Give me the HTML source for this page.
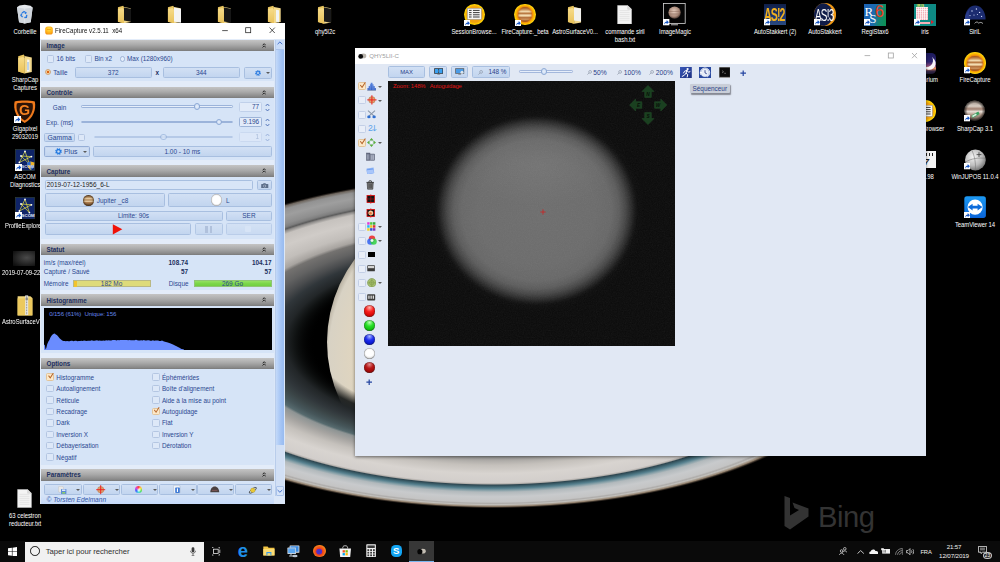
<!DOCTYPE html>
<html lang="fr">
<head>
<meta charset="utf-8">
<title>Bureau - FireCapture</title>
<style>
html,body{margin:0;padding:0;background:#000;}
body{width:1000px;height:562px;overflow:hidden;position:relative;font-family:"Liberation Sans",sans-serif;}
.abs{position:absolute;}
#saturn{position:absolute;left:0;top:0;width:1000px;height:562px;}
/* desktop icons */
.dl{position:absolute;color:#fff;font-size:6.6px;line-height:8px;text-align:center;white-space:nowrap;transform:translateX(-50%) scaleX(.9);text-shadow:0 0 1px #000,0 1px 1px #000;letter-spacing:-0.05px;}
.fcico{width:21.2px;height:21.2px;border-radius:50%;background:radial-gradient(circle,#c05a10 0,#d87010 36%,#f49a10 50%,#ffc800 64%,#ffe440 78%,#e8b000 90%,rgba(200,140,0,0) 100%);}
.fcico:before{content:"";position:absolute;left:3.2px;top:3.2px;right:3.2px;bottom:3.2px;border-radius:50%;background:linear-gradient(#8a5428,#c89058 16%,#f0d8ac 30%,#b87840 43%,#f4e0b8 55%,#f0d4a4 60%,#b06c38 71%,#d09860 82%,#94582c 94%);box-shadow:inset 0 0 1.6px .8px rgba(200,90,10,.7),0 0 1.4px .8px rgba(236,130,10,.85)}
/* FireCapture window */
#fc{position:absolute;left:40px;top:23px;width:244.5px;height:480.5px;background:#e3ecf9;overflow:hidden;}
#fc .title{position:absolute;left:0;top:0;width:100%;height:16px;background:#fff;}
.hdr{position:absolute;left:0.5px;width:233.5px;height:11.5px;background:linear-gradient(#c4c4c4,#a9a9a9 45%,#8a8a8a 85%,#7a7a7a);color:#1d2f5e;font-weight:bold;font-size:6.3px;line-height:12.6px;}
.hdr span{position:absolute;left:6px;top:0;}
.hdr i{position:absolute;right:7px;top:2.5px;width:5px;height:6px;}
.pan{position:absolute;left:0.5px;width:233.5px;background:#d6e4f7;}
.t{position:absolute;color:#2b4890;font-size:6.35px;line-height:9px;white-space:nowrap;}
.btn{position:absolute;box-sizing:border-box;border:1px solid #a8bfe0;border-radius:1.5px;background:linear-gradient(#d2e0f4,#c2d5ef);color:#2b4890;font-size:6.45px;text-align:center;white-space:nowrap;}
.cb{position:absolute;box-sizing:border-box;width:7.5px;height:7.5px;border:1px solid #b4c6e2;border-radius:1.5px;background:#dde8f8;}
.chev{position:absolute;right:7.6px;top:3.4px;width:4.4px;height:5.2px;fill:none;stroke:#1c1c1c;stroke-width:1.05}
.rb{position:absolute;box-sizing:border-box;width:5.6px;height:5.6px;border:1px solid #9fb4d6;border-radius:50%;background:#e4edfa;}
.rb.on{width:6.2px;height:6.2px;border-color:#cda67a;background:radial-gradient(#de6414 36%,#f6cf9c 52%)}
.dd{position:absolute;width:0;height:0;border-left:2px solid transparent;border-right:2px solid transparent;border-top:2.4px solid #5a5a5a;}
.sl{position:absolute;box-sizing:border-box;height:2.4px;border:0.8px solid #9bb3da;border-radius:1.2px;background:#e6eefa;}
.th{position:absolute;box-sizing:border-box;width:6.4px;height:6.4px;border-radius:50%;border:0.8px solid #8eaad6;background:radial-gradient(#e8f0fc,#c4d6f0);}
.vf{position:absolute;box-sizing:border-box;width:23.4px;height:9.4px;border:1px solid #c0d0ea;border-radius:1.5px;background:#e2ebf9;color:#2b4890;font-size:6.45px;line-height:7.6px;text-align:right;padding-right:2.2px;}
.spin{position:absolute;width:5px;height:9px;fill:none;stroke:#3a5fae;stroke-width:.8}
.t.b{font-weight:bold;color:#1d2f5e;font-size:6.4px}
.bar{position:absolute;box-sizing:border-box;height:7.8px;border:1px solid #aaa;color:#2b4890;font-size:6.45px;line-height:6.4px;text-align:center;}
.cb.ck{background:#fce8c8;border-color:#e2c49a}
.cb.ck:after{content:"";position:absolute;left:.6px;top:-1.6px;width:6px;height:6px;background:#b4642c;clip-path:polygon(4% 52%,18% 42%,38% 72%,84% 0,98% 8%,40% 98%);}
/* QHY window */
#qhy{position:absolute;left:354.6px;top:48px;width:571.9px;height:408px;background:#e1e8f4;overflow:hidden;box-shadow:0 1px 3px rgba(0,0,0,.5);}
#qhy .title{position:absolute;left:0;top:0;width:100%;height:16px;background:#fff;}
.cb.q{width:8px;height:8px;border-color:#c3cfe6;background:#e9eef8}
.cb.q.ck{background:#fce8c8;border-color:#e2c49a}
.cb.q.ck:after{left:.8px;top:-1.4px;width:6.4px;height:6.4px}
.ball{position:absolute;left:9.3px;width:11.4px;height:11.4px;border-radius:50%;box-shadow:inset 0 0 .8px .4px rgba(40,40,40,.55)}
/* taskbar */
#tb{position:absolute;left:0;top:541px;width:1000px;height:21px;background:#0a0a0a;}
</style>
</head>
<body>
<!--SATURN-->
<svg id="saturn" viewBox="0 0 1000 562" width="1000" height="562">
<defs>
<radialGradient id="rgn" cx="0.5" cy="0.5" r="0.5">
<stop offset="0" stop-color="#000" stop-opacity="0"/>
<stop offset="0.47" stop-color="#000" stop-opacity="0"/>
<stop offset="0.52" stop-color="#111414" stop-opacity="0.9"/>
<stop offset="0.546" stop-color="#222628"/>
<stop offset="0.585" stop-color="#30363a"/>
<stop offset="0.61" stop-color="#3a4446"/>
<stop offset="0.64" stop-color="#46565a"/>
<stop offset="0.662" stop-color="#566a6e"/>
<stop offset="0.672" stop-color="#8e9494"/>
<stop offset="0.70" stop-color="#a5a3a0"/>
<stop offset="0.74" stop-color="#c5c1bc"/>
<stop offset="0.79" stop-color="#d8d4d0"/>
<stop offset="0.845" stop-color="#d2cecb"/>
<stop offset="0.853" stop-color="#b4b0ac"/>
<stop offset="0.859" stop-color="#2e4650"/>
<stop offset="0.868" stop-color="#3c606c"/>
<stop offset="0.880" stop-color="#56808e"/>
<stop offset="0.891" stop-color="#86a0a8"/>
<stop offset="0.902" stop-color="#b2b9bc"/>
<stop offset="0.93" stop-color="#c8cacc"/>
<stop offset="0.962" stop-color="#c4c4c4"/>
<stop offset="0.970" stop-color="#aeacaa"/>
<stop offset="0.977" stop-color="#c2c0bc"/>
<stop offset="0.988" stop-color="#94826e"/>
<stop offset="0.998" stop-color="#1a1410" stop-opacity="0.5"/>
<stop offset="1" stop-color="#1a1410" stop-opacity="0"/>
</radialGradient>
<radialGradient id="rgf" cx="0.5" cy="0.5" r="0.5">
<stop offset="0" stop-color="#000" stop-opacity="0"/>
<stop offset="0.47" stop-color="#000" stop-opacity="0"/>
<stop offset="0.52" stop-color="#111414" stop-opacity="0.9"/>
<stop offset="0.546" stop-color="#222628"/>
<stop offset="0.585" stop-color="#30363a"/>
<stop offset="0.615" stop-color="#4a4c4e"/>
<stop offset="0.65" stop-color="#626262"/>
<stop offset="0.69" stop-color="#747270"/>
<stop offset="0.705" stop-color="#a8a4a0"/>
<stop offset="0.74" stop-color="#c2beba"/>
<stop offset="0.80" stop-color="#d0ccc8"/>
<stop offset="0.85" stop-color="#c6c2be"/>
<stop offset="0.866" stop-color="#8e8c8a"/>
<stop offset="0.874" stop-color="#5c5c5c"/>
<stop offset="0.884" stop-color="#7e7e7e"/>
<stop offset="0.90" stop-color="#8e8e8e"/>
<stop offset="0.94" stop-color="#9e9e9e"/>
<stop offset="0.972" stop-color="#929292"/>
<stop offset="0.988" stop-color="#6e665e"/>
<stop offset="0.998" stop-color="#1a1410" stop-opacity="0.5"/>
<stop offset="1" stop-color="#1a1410" stop-opacity="0"/>
</radialGradient>
<radialGradient id="gg" cx="0.6" cy="0.55" r="0.62">
<stop offset="0" stop-color="#ecc89c"/>
<stop offset="0.45" stop-color="#e8cfaa"/>
<stop offset="0.8" stop-color="#e2d6be"/>
<stop offset="0.96" stop-color="#d8d2c4"/>
<stop offset="1" stop-color="#a8a090"/>
</radialGradient>
<clipPath id="up"><rect x="0" y="0" width="1000" height="342"/></clipPath>
<clipPath id="dn"><rect x="0" y="342" width="1000" height="220"/></clipPath>
</defs>
<rect width="1000" height="562" fill="#000"/>
<g clip-path="url(#up)"><ellipse cx="493" cy="342.4" rx="380" ry="166" fill="url(#rgf)"/></g>
<ellipse cx="493" cy="342" rx="166" ry="150" fill="url(#gg)"/>
<g clip-path="url(#dn)"><ellipse cx="493" cy="342.4" rx="380" ry="166" fill="url(#rgn)"/></g>
<!-- Bing watermark -->
<g fill="#333">
<path d="M784.5 496 L790 498 L790 515.5 L799 510 L794.5 508 L792.5 502.5 L808.5 508.5 L808.5 516.5 L790 529.5 L784.5 526 Z"/>
<text x="818" y="526.5" font-family="Liberation Sans, sans-serif" font-size="29.2" letter-spacing="-0.5">Bing</text>
</g>
</svg>
<!--/SATURN-->
<!--DESKTOP-->
<svg width="0" height="0" style="position:absolute">
<defs>
<linearGradient id="fdg" x1="0" y1="0" x2="0" y2="1"><stop offset="0" stop-color="#f7dc8a"/><stop offset="1" stop-color="#e9c25a"/></linearGradient>
<symbol id="folder" viewBox="0 0 16 20"><path d="M1 2.2L6.6 .6 7.4 2V19.4L1 17.6Z" fill="#e8c45e"/><path d="M7.4 2L14.6 3.4V18L7.4 19.4Z" fill="#f3d98c"/><path d="M1 4L6 3 7.4 4.6V19.4L1 17.6Z" fill="url(#fdg)"/></symbol>
<symbol id="sc" viewBox="0 0 7 7"><rect width="7" height="7" fill="#fff"/><path d="M1.2 6C1.3 3.600 2.600 2.700 3.900 2.700V1L6.300 3.400 3.900 5.700V4.200C2.900 4.200 1.900 4.600 1.200 6Z" fill="#1857c4"/></symbol>
<symbol id="txt" viewBox="0 0 15 19"><path d="M.6 .4H10.6L14.4 4.2V18.6H.6Z" fill="#f4f4f4" stroke="#d0d0d0" stroke-width=".5"/><path d="M10.6 .4V4.2H14.4" fill="#dcdcdc" stroke="#c4c4c4" stroke-width=".4"/><path d="M2.4 5.4H12.4M2.4 7.4H12.4M2.4 9.4H12.4M2.4 11.4H12.4M2.4 13.4H12.4M2.4 15.4H12.4" stroke="#dedede" stroke-width=".7"/></symbol>
</defs>
</svg>
<!-- left column -->
<svg class="abs" style="left:15.2px;top:4.2px" width="19.4" height="19.8" viewBox="0 0 18 19"><path d="M1.6 3.2L4 1.4 9 .8 14.6 1.6 16.6 3.4 14.8 17.6 9 18.6 3.6 17.6Z" fill="#e4e8ec"/><path d="M1.6 3.2L9 4.6 16.6 3.4 14.8 17.6 9 18.6 3.6 17.6Z" fill="#cfd5dc"/><path d="M9 4.6V18.6" stroke="#eef1f4" stroke-width=".5"/><path d="M6.4 8.6L8.4 7.2 10.2 8.4 9.2 9.4M11 10.4L10.6 12.8 8.6 13M7 12.6L5.4 11 6.2 9.2" fill="none" stroke="#2a7be0" stroke-width="1.3"/></svg>
<div class="dl" style="left:25px;top:27.5px">Corbeille</div>
<svg class="abs" style="left:16.6px;top:53.5px" width="16.4" height="20"><use href="#folder"/></svg>
<svg class="abs" style="left:26.2px;top:59px" width="4" height="13" viewBox="0 0 4 13"><path d="M1.2 .4L3.4 .8 3.6 12.4 .8 12.8Z" fill="#f4f6f8"/><path d="M2 3V11" stroke="#6aa0d8" stroke-width=".8"/></svg>
<div class="dl" style="left:25px;top:76px">SharpCap<br>Captures</div>
<svg class="abs" style="left:13.4px;top:100px" width="23.4" height="23.6" viewBox="0 0 23.4 23.6"><path d="M1.600 1.400C6 .2 17.400 .2 21.800 1.400 23.400 9 20.400 18.200 11.700 23 3 18.200 0 9 1.600 1.400Z" fill="#f07a1c"/><path d="M3.800 3.400C7.600 2.600 15.800 2.600 19.600 3.400 20.800 9.400 18.400 16.600 11.700 20.400 5 16.600 2.600 9.400 3.800 3.400Z" fill="#2c1408"/></svg>
<div class="abs" style="left:18.6px;top:102px;font-size:15.5px;line-height:16px;font-weight:bold;color:#f58220;transform:scaleX(.92);transform-origin:0 0">G</div>
<svg class="abs" style="left:13.5px;top:116px" width="7" height="7"><use href="#sc"/></svg>
<div class="dl" style="left:25px;top:124.6px">Gigapixel<br>29032019</div>
<svg class="abs" style="left:14.8px;top:148.6px" width="20" height="22" viewBox="0 0 20 22"><rect x=".3" y=".3" width="19.4" height="21.4" fill="#0f2468" stroke="#3a4a30" stroke-width=".5"/><path d="M10 2.4L4.4 13.4 16.4 7.6 6 7 14.4 15Z" fill="none" stroke="#e8e040" stroke-width=".7"/><g fill="#fff"><circle cx="10" cy="2.4" r=".9"/><circle cx="4.4" cy="13.4" r=".9"/><circle cx="16.4" cy="7.6" r=".9"/><circle cx="6" cy="7" r=".9"/><circle cx="14.4" cy="15" r=".9"/></g><path d="M12 13.6L15.6 12.4 19.4 13.6C19.4 17.6 18 19.8 15.6 21 13.4 19.8 12 17.6 12 13.6Z" fill="#f0b428"/><path d="M15.6 12.4V21M12.2 16.4H19.2" stroke="#2a62c8" stroke-width="0"/><path d="M12 13.6L15.6 12.4V16.6H12.2ZM15.6 16.6H19.1C18.8 18.8 17.6 20.2 15.6 21Z" fill="#2a6ad0"/></svg>
<svg class="abs" style="left:14.5px;top:163.5px" width="7" height="7"><use href="#sc"/></svg>
<div class="abs" style="left:21.4px;top:164.4px;font-size:4.2px;line-height:5px;font-weight:bold;color:#cfd8f0">SCOM</div>
<div class="dl" style="left:25px;top:173px">ASCOM<br>Diagnostics</div>
<svg class="abs" style="left:14.8px;top:196.8px" width="20" height="22.4" viewBox="0 0 20 22.4"><rect x=".3" y=".3" width="19.4" height="21.8" fill="#0f2468" stroke="#3a4a30" stroke-width=".5"/><path d="M10 2.4L4.4 14 16.4 7.8 6 7 14.4 15.6Z" fill="none" stroke="#e8e040" stroke-width=".7"/><g fill="#fff"><circle cx="10" cy="2.4" r=".9"/><circle cx="4.4" cy="14" r=".9"/><circle cx="16.4" cy="7.8" r=".9"/><circle cx="6" cy="7" r=".9"/><circle cx="14.4" cy="15.6" r=".9"/></g></svg>
<svg class="abs" style="left:14.5px;top:212px" width="7" height="7"><use href="#sc"/></svg>
<div class="abs" style="left:21.6px;top:213.4px;font-size:4.4px;line-height:5px;font-weight:bold;color:#e6ecfa">SCOM</div>
<div class="dl" style="left:5.2px;top:221.7px;transform:scaleX(.9);transform-origin:0 0;text-align:left">ProfileExplorer</div>
<div class="abs" style="left:13px;top:251px;width:22px;height:15.4px;background:radial-gradient(ellipse at 62% 45%,#4a4a4a,#2c2c2c 45%,#141414 80%,#0a0a0a)"></div>
<div class="dl" style="left:1.6px;top:269px;transform:scaleX(.9);transform-origin:0 0;text-align:left">2019-07-09-2202_4</div>
<svg class="abs" style="left:17px;top:294.5px" width="16" height="21" viewBox="0 0 16 21"><path d="M.6 1.2H13.4L15.4 3V20.4H.6Z" fill="#f1d67e"/><path d="M.6 3.4H15.4V20.4H.6Z" fill="#ecc95e"/><rect x="8.2" y=".4" width="3" height="19.6" fill="#e8e8e8"/><path d="M9.7 .8V19.6" stroke="#7a7a7a" stroke-width="1" stroke-dasharray=".8 .8"/><rect x="8.6" y="2.6" width="2.2" height="2.6" fill="#8a8a8a"/></svg>
<div class="dl" style="left:1.6px;top:318px;transform:scaleX(.9);transform-origin:0 0;text-align:left">AstroSurfaceV0</div>
<svg class="abs" style="left:17.4px;top:489px" width="15" height="19"><use href="#txt"/></svg>
<div class="dl" style="left:25px;top:512px">63 celestron<br>reducteur.txt</div>
<!-- top row -->
<svg class="abs" style="left:116.5px;top:4.5px" width="15" height="19"><use href="#folder"/></svg><div class="abs" style="left:123.6px;top:7.6px;width:6.6px;height:13.4px;background:#161616;transform:skewY(10deg)"></div>
<svg class="abs" style="left:167px;top:4.5px" width="15" height="19"><use href="#folder"/></svg><div class="abs" style="left:173.6px;top:7.6px;width:6.8px;height:13.6px;background:#f4f4f4;transform:skewY(10deg)"></div>
<svg class="abs" style="left:217px;top:4.5px" width="15" height="19"><use href="#folder"/></svg><div class="abs" style="left:223.6px;top:7.6px;width:6.8px;height:13.6px;background:#161616;transform:skewY(10deg)"></div>
<svg class="abs" style="left:266.6px;top:4.5px" width="15" height="19"><use href="#folder"/></svg><div class="abs" style="left:275.6px;top:9.6px;width:2.6px;height:12px;background:#f1f4f6;transform:skewY(10deg)"></div>
<svg class="abs" style="left:317px;top:4.5px" width="15.4" height="19.4"><use href="#folder"/></svg><div class="abs" style="left:324px;top:7.8px;width:6.8px;height:13.6px;background:#1a1a1a;transform:skewY(10deg)"></div>
<div class="dl" style="left:324.5px;top:28px">qhy5l2c</div>
<!-- SessionBrowser -->
<div class="abs" style="left:463.6px;top:3.6px;width:21.4px;height:21.4px;border-radius:50%;background:radial-gradient(circle,#f0a010 0,#f0a010 52%,#ffd000 66%,#ffe640 78%,#e8b400 90%,rgba(200,140,0,0) 100%)"></div>
<svg class="abs" style="left:467.2px;top:8.4px" width="14.6" height="11.6" viewBox="0 0 14.6 11.6"><rect x=".3" y=".3" width="14" height="11" fill="#f6f6f6" stroke="#9a9a9a" stroke-width=".6"/><path d="M2 2.4H4.6M6 2.4H12.6M2 4.6H4.6M6 4.6H12.6M2 6.8H4.6M6 6.8H12.6M2 9H4.6M6 9H12.6" stroke="#3a3a3a" stroke-width="1"/></svg>
<svg class="abs" style="left:463.6px;top:19.6px" width="6.6" height="6.6"><use href="#sc"/></svg>
<div class="dl" style="left:473.8px;top:28px">SessionBrowse...</div>
<!-- FireCapture beta -->
<div class="abs fcico" style="left:514.4px;top:3.8px"></div>
<svg class="abs" style="left:514.6px;top:19.6px" width="6.6" height="6.6"><use href="#sc"/></svg>
<div class="dl" style="left:524.5px;top:28px">FireCapture._beta</div>
<svg class="abs" style="left:567px;top:4.5px" width="15.4" height="19.6"><use href="#folder"/></svg><div class="abs" style="left:573.8px;top:8px;width:7px;height:13.4px;background:#f1f1ee;transform:skewY(10deg)"></div>
<div class="dl" style="left:574.7px;top:28px">AstroSurfaceV0...</div>
<svg class="abs" style="left:617.2px;top:4.6px" width="15.2" height="19.4"><use href="#txt"/></svg>
<div class="dl" style="left:624.6px;top:28px">commande siril<br>bash.txt</div>
<!-- ImageMagic -->
<svg class="abs" style="left:663.4px;top:3.4px" width="22.6" height="22.4" viewBox="0 0 22.6 22.4"><rect x=".4" y=".4" width="21.8" height="20" fill="#050505" stroke="#d8d8d8" stroke-width=".8"/><defs><radialGradient id="imj" cx=".45" cy=".4" r=".6"><stop offset="0" stop-color="#e8d0c0"/><stop offset=".7" stop-color="#a88878"/><stop offset="1" stop-color="#4a3830"/></radialGradient></defs><circle cx="11.6" cy="9.6" r="6.2" fill="url(#imj)"/><path d="M6 8.4H17M6.2 11H17" stroke="#8a6a5a" stroke-width=".8" opacity=".7"/><path d="M8 21.8H15" stroke="#d0d0d0" stroke-width=".9"/></svg>
<svg class="abs" style="left:663.4px;top:19.4px" width="6.6" height="6.6"><use href="#sc"/></svg>
<div class="dl" style="left:674.5px;top:28px">ImageMagic</div>
<!-- AS!2 -->
<div class="abs" style="left:763.6px;top:3.8px;width:22px;height:21.6px;background:linear-gradient(#10204a,#1c3670 60%,#2a4a80);overflow:hidden"><div class="abs" style="left:.6px;top:1px;font-size:14.5px;line-height:14px;font-weight:bold;color:#f0b020;letter-spacing:-1.2px;transform:scale(.73,1.32);transform-origin:0 0;white-space:nowrap">AS!2</div></div>
<svg class="abs" style="left:763.6px;top:19px" width="6.6" height="6.6"><use href="#sc"/></svg>
<div class="dl" style="left:774.5px;top:28px">AutoStakkert (2)</div>
<!-- AS!3 -->
<div class="abs" style="left:813.6px;top:3.4px;width:22.4px;height:22.4px;border-radius:50%;background:#f09a18;overflow:hidden"><div class="abs" style="left:-3.4px;top:-.6px;width:22.6px;height:23.6px;border-radius:50%;background:#101c48"></div><div class="abs" style="left:1.2px;top:4.2px;font-size:13px;line-height:12px;color:#fff;letter-spacing:-1px;transform:scale(.76,1.28);transform-origin:0 0;white-space:nowrap">AS!3</div></div>
<svg class="abs" style="left:813.6px;top:19px" width="6.6" height="6.6"><use href="#sc"/></svg>
<div class="dl" style="left:824.5px;top:28px">AutoStakkert</div>
<!-- RegiStax -->
<div class="abs" style="left:863.6px;top:3.6px;width:22.4px;height:22px;background:linear-gradient(100deg,#1c62b4 0,#1c6ab0 45%,#128a6a 75%,#0c9050);overflow:hidden"><div class="abs" style="left:1px;top:1.4px;font-family:'Liberation Serif',serif;font-size:13px;line-height:13px;color:#fff">R</div><div class="abs" style="left:5.6px;top:8.4px;font-family:'Liberation Serif',serif;font-size:13px;line-height:13px;color:#e6eef8">S</div><div class="abs" style="left:11.4px;top:-.8px;font-size:16px;line-height:17px;color:#f03a1c">6</div></div>
<svg class="abs" style="left:863.6px;top:19px" width="6.6" height="6.6"><use href="#sc"/></svg>
<div class="dl" style="left:875px;top:28px">RegiStax6</div>
<!-- iris -->
<div class="abs" style="left:913.6px;top:3.6px;width:22.4px;height:22px;background:#0e8a84;overflow:hidden"><div class="abs" style="left:2.4px;top:3.6px;width:12.4px;height:13px;background:#f4b0b8;background-image:linear-gradient(90deg,rgba(255,255,255,.75) .6px,transparent .6px),linear-gradient(rgba(255,255,255,.75) .6px,transparent .6px);background-size:2.06px 2.16px"></div><div class="abs" style="left:3px;top:.4px;font-size:3.4px;line-height:4px;color:#f0e040;font-weight:bold;letter-spacing:.3px">IRIS</div><div class="abs" style="left:6.4px;top:18px;width:9.6px;height:2.6px;background:#f4b0b8"></div><div class="abs" style="left:17.6px;top:16.4px;width:0;height:0;border-top:2.4px solid transparent;border-bottom:2.4px solid transparent;border-left:3px solid #e02030"></div></div>
<svg class="abs" style="left:913.6px;top:19px" width="6.6" height="6.6"><use href="#sc"/></svg>
<div class="dl" style="left:925px;top:28px">iris</div>
<!-- SiriL -->
<svg class="abs" style="left:963.6px;top:3.6px" width="22.4" height="22.4" viewBox="0 0 22.4 22.4"><path d="M.8 15.6C.8 7.6 5.2 1.6 11.2 1.6S21.6 7.6 21.6 15.6Z" fill="#1c2c70"/><path d="M.8 15.6C.8 11 3 7 6.4 4.4 4 8 4.4 12.6 7 15.6Z" fill="#2a3c8a"/><g fill="#d8e0ff"><circle cx="8" cy="7" r=".7"/><circle cx="12.4" cy="5" r=".7"/><circle cx="15.6" cy="8.4" r=".7"/><circle cx="10" cy="11" r=".6"/><circle cx="6" cy="11.6" r=".6"/><circle cx="17.6" cy="12.4" r=".6"/><circle cx="13.4" cy="10.6" r=".5"/></g><path d="M10.6 19.4C12 17.6 13.6 17.6 14.8 19.2 16 18 17.6 18.2 19 19.6" fill="none" stroke="#e8e8e8" stroke-width=".7"/></svg>
<svg class="abs" style="left:963.6px;top:19px" width="6.6" height="6.6"><use href="#sc"/></svg>
<div class="dl" style="left:975px;top:28px">SiriL</div>
<!-- right column -->
<div class="abs fcico" style="left:964.2px;top:52.4px;width:21.6px;height:21.6px"></div>
<svg class="abs" style="left:963.6px;top:67.2px" width="6.6" height="6.6"><use href="#sc"/></svg>
<div class="dl" style="left:975px;top:76.3px">FireCapture</div>
<svg class="abs" style="left:963.4px;top:100.4px" width="22.6" height="22.4" viewBox="0 0 22.6 22.4"><defs><linearGradient id="scj" x1="0" y1="0" x2="0" y2="1"><stop offset="0" stop-color="#9a8c82"/><stop offset=".28" stop-color="#d8cec4"/><stop offset=".42" stop-color="#a08070"/><stop offset=".55" stop-color="#e6ded6"/><stop offset=".7" stop-color="#b09888"/><stop offset="1" stop-color="#6a5c54"/></linearGradient><radialGradient id="scs" cx=".5" cy=".5" r=".5"><stop offset=".7" stop-color="#000" stop-opacity="0"/><stop offset="1" stop-color="#000" stop-opacity=".65"/></radialGradient></defs><circle cx="11.6" cy="10.6" r="10.2" fill="url(#scj)"/><circle cx="11.6" cy="10.6" r="10.2" fill="url(#scs)"/><path d="M8.4 15.6L15.4 11.6 16.6 14 9.6 18Z" fill="#3aa060"/><path d="M9 15.8L13 13.6 13.8 15 9.8 17.2Z" fill="#d8f0e0"/></svg>
<svg class="abs" style="left:963.6px;top:115.4px" width="6.6" height="6.6"><use href="#sc"/></svg>
<div class="dl" style="left:975px;top:124.9px">SharpCap 3.1</div>
<svg class="abs" style="left:963.6px;top:148.8px" width="22.4" height="22.4" viewBox="0 0 22.4 22.4"><defs><radialGradient id="wj" cx=".4" cy=".35" r=".7"><stop offset="0" stop-color="#f4f4f4"/><stop offset=".6" stop-color="#bcbcbc"/><stop offset="1" stop-color="#6c6c6c"/></radialGradient></defs><circle cx="11.4" cy="11" r="10.4" fill="url(#wj)"/><path d="M1.6 13C7 9.6 15 8.4 21.4 9.4M8 1.4C10.6 7 12 14 11.4 21.2" fill="none" stroke="#7a7a7a" stroke-width=".6"/><path d="M12.6 5.6H17.4M15 3.2V8" stroke="#3a3a3a" stroke-width=".8"/></svg>
<svg class="abs" style="left:963.6px;top:163.4px" width="6.6" height="6.6"><use href="#sc"/></svg>
<div class="dl" style="left:975px;top:172.6px">WinJUPOS 11.0.4</div>
<svg class="abs" style="left:963.8px;top:196.4px" width="22.2" height="22.2" viewBox="0 0 22.2 22.2"><defs><linearGradient id="tv" x1="0" y1="0" x2="0" y2="1"><stop offset="0" stop-color="#1c9af4"/><stop offset="1" stop-color="#0a64d8"/></linearGradient></defs><rect x=".3" y=".3" width="21.6" height="21.6" rx="2.6" fill="url(#tv)"/><circle cx="11.1" cy="11.1" r="7.6" fill="#fff"/><path d="M3.8 11.1L8.6 7.8V9.8H13.6V7.8L18.4 11.1 13.6 14.4V12.4H8.6V14.4Z" fill="#0c6cdc"/></svg>
<svg class="abs" style="left:963.6px;top:211.6px" width="6.6" height="6.6"><use href="#sc"/></svg>
<div class="dl" style="left:975px;top:220.6px">TeamViewer 14</div>
<!-- partially hidden column -->
<div class="abs" style="left:914.6px;top:52.6px;width:21px;height:21.4px;border-radius:4.6px;background:linear-gradient(#1c1a5c 0,#2c2470 42%,#8a4a7a 62%,#e08a5a 74%,#3a2a4a 86%,#1a1630)"></div>
<div class="abs" style="left:920px;top:53.6px;width:13px;height:13px;border-radius:50%;box-shadow:3px 2.4px 0 0 #fff;transform:rotate(8deg);opacity:.95"></div>
<div class="dl" style="left:925px;top:75.6px">Stellarium</div>
<div class="abs" style="left:914.4px;top:100.2px;width:21.4px;height:21.4px;border-radius:50%;background:radial-gradient(circle,#f0a010 0,#f0a010 52%,#ffd000 66%,#ffe640 78%,#e8b400 90%,rgba(200,140,0,0) 100%)"></div>
<svg class="abs" style="left:918px;top:105px" width="14.6" height="11.6" viewBox="0 0 14.6 11.6"><rect x=".3" y=".3" width="14" height="11" fill="#f6f6f6" stroke="#9a9a9a" stroke-width=".6"/><path d="M2 2.4H4.6M6 2.4H12.6M2 4.6H4.6M6 4.6H12.6M2 6.8H4.6M6 6.8H12.6M2 9H4.6M6 9H12.6" stroke="#3a3a3a" stroke-width="1"/></svg>
<div class="dl" style="left:922.6px;top:125.2px">SessionBrowser</div>
<div class="abs" style="left:915px;top:151px;width:20.6px;height:17.4px;background:#f4f4f4"></div><div class="abs" style="left:917px;top:153px;width:16px;height:3px;background:repeating-linear-gradient(90deg,#222 0 1.4px,#f4f4f4 1.4px 3px)"></div><div class="abs" style="left:924px;top:158.4px;font-size:9px;line-height:9px;font-weight:bold;font-style:italic;color:#222">7</div>
<div class="dl" style="left:916.4px;top:172.6px">AviStack 2.98</div>
<!--/DESKTOP-->
<!--FC-->
<div id="fc">
<div class="title">
<svg class="abs" style="left:4.5px;top:3.2px" width="8" height="9" viewBox="0 0 8 9"><defs><radialGradient id="fci" cx=".5" cy=".35" r=".7"><stop offset="0" stop-color="#ffe34a"/><stop offset=".6" stop-color="#ffb31a"/><stop offset="1" stop-color="#f08a10"/></radialGradient></defs><rect x=".2" y=".4" width="7.6" height="8.2" rx="2.6" fill="url(#fci)"/><rect x="2" y="3.2" width="4" height=".8" fill="#f39a16"/></svg>
<div class="abs" style="left:15px;top:2.6px;font-size:7.1px;line-height:10px;color:#111;white-space:pre;transform:scaleX(.865);transform-origin:0 0">FireCapture v2.5.11  x64</div>
<svg class="abs" style="left:178px;top:2px" width="62" height="12" viewBox="0 0 62 12" fill="none" stroke="#222" stroke-width=".75"><path d="M4.2 5.6h5.6"/><rect x="27.7" y="2.7" width="5" height="5"/><path d="M51.6 2.6l5.2 5.4M56.8 2.6l-5.2 5.4"/></svg>
</div>
<!-- scrollbar -->
<div class="abs" style="left:234px;top:16px;width:10.5px;height:464.5px;background:#dbe7f8"></div>
<div class="abs" style="left:235.3px;top:16.5px;width:8.6px;height:456.5px;background:#d2e0f5;border-left:1px solid #b9cdeb;box-sizing:border-box"></div>
<div class="abs" style="left:236.3px;top:27px;width:7.6px;height:394.5px;background:linear-gradient(90deg,#c3d9f9,#a4c4f4 60%,#98bbf0);"></div>
<div class="abs" style="left:236.3px;top:17px;width:7.6px;height:9.5px;background:#c9dcf8;border-bottom:1px solid #a9c2ea;box-sizing:border-box"></div>
<svg class="abs" style="left:237.3px;top:18px" width="5.8" height="4.4" viewBox="0 0 6.5 5" fill="none" stroke="#3f6cc8" stroke-width="1.1"><path d="M.6 3.6L3.25 1.1 5.9 3.6"/></svg>
<div class="abs" style="left:236.3px;top:463px;width:7.6px;height:10px;background:#d6e4f8;border:1px solid #a9c2ea;box-sizing:border-box;border-radius:1px"></div>
<svg class="abs" style="left:237.3px;top:466.4px" width="5.8" height="4.4" viewBox="0 0 6.5 5" fill="none" stroke="#3f6cc8" stroke-width="1.1"><path d="M.6 1.2L3.25 3.7 5.9 1.2"/></svg>
<!-- IMAGE -->
<div class="hdr" style="top:16.5px"><span>Image</span><svg class="chev" viewBox="0 0 5 6"><path d="M.6 2.7L2.5 .8 4.4 2.7M.6 5.2L2.5 3.3 4.4 5.2"/></svg></div>
<div class="pan" style="top:28px;height:30px">
<div class="cb" style="left:6px;top:4.3px"></div><div class="t" style="left:16.1px;top:3.4px">16 bits</div>
<div class="cb" style="left:44px;top:4.3px"></div><div class="t" style="left:53.9px;top:3.4px">Bin x2</div>
<div class="rb" style="left:79.4px;top:5.2px"></div><div class="t" style="left:86.4px;top:3.4px">Max (1280x960)</div>
<div class="rb on" style="left:4.1px;top:18.3px"></div><div class="t" style="left:12.7px;top:17px">Taille</div>
<div class="btn" style="left:34.2px;top:16px;width:77px;height:11px;line-height:9.4px">372</div>
<div class="t" style="left:115px;top:17px;font-weight:bold;color:#1d2f5e">x</div>
<div class="btn" style="left:122.2px;top:16px;width:77.3px;height:11px;line-height:9.4px">344</div>
<div class="btn" style="left:203.8px;top:16px;width:27.4px;height:11.5px"><svg class="abs" style="left:9.5px;top:2.2px" width="6" height="6" viewBox="0 0 6 6"><circle cx="3" cy="3" r="2.1" fill="none" stroke="#2a7be0" stroke-width="1.5" stroke-dasharray="1.1 .55"/><circle cx="3" cy="3" r="1.5" fill="none" stroke="#2a7be0" stroke-width=".9"/></svg><i class="dd" style="left:20.5px;top:4.2px"></i></div>
</div>
<!-- CONTROLE -->
<div class="hdr" style="top:63.5px"><span>Contrôle</span><svg class="chev" viewBox="0 0 5 6"><path d="M.6 2.7L2.5 .8 4.4 2.7M.6 5.2L2.5 3.3 4.4 5.2"/></svg></div>
<div class="pan" style="top:75px;height:62px">
<div class="t" style="left:12.3px;top:4.8px">Gain</div>
<div class="sl" style="left:40px;top:7.4px;width:152.5px"></div><div class="th" style="left:153.6px;top:5.4px"></div>
<div class="vf" style="left:198.5px;top:4.2px">77</div><svg class="spin" style="left:224px;top:4.6px" viewBox="0 0 5 9"><path d="M.7 3L2.5 1 4.3 3M.7 6L2.5 8 4.3 6"/></svg>
<div class="t" style="left:5.6px;top:19.8px">Exp. (ms)</div>
<div class="sl" style="left:40px;top:22.6px;width:152.5px"></div><div class="th" style="left:175.3px;top:20.6px"></div>
<div class="vf" style="left:198.5px;top:19.3px;border-color:#9db4d8">9.196</div><svg class="spin" style="left:224px;top:19.8px" viewBox="0 0 5 9"><path d="M.7 3L2.5 1 4.3 3M.7 6L2.5 8 4.3 6"/></svg>
<div class="btn" style="left:3.5px;top:35.3px;width:31.2px;height:8.6px;line-height:7px;font-size:6.8px">Gamma</div>
<div class="cb" style="left:37.3px;top:35.6px"></div>
<div class="sl" style="left:53.2px;top:37.8px;width:139.3px;opacity:.55"></div><div class="th" style="left:119.7px;top:35.8px;opacity:.6"></div>
<div class="vf" style="left:198.5px;top:34.4px;opacity:.5;color:#7d93bd">1</div><svg class="spin" style="left:224px;top:34.8px;opacity:.45" viewBox="0 0 5 9"><path d="M.7 3L2.5 1 4.3 3M.7 6L2.5 8 4.3 6"/></svg>
<div class="btn" style="left:3.5px;top:47.5px;width:46.1px;height:11.3px;border-color:#95aed6;box-shadow:inset 0 0 0 .6px #c0d2ee"><svg class="abs" style="left:9.8px;top:1.6px" width="7" height="7" viewBox="0 0 7 7"><circle cx="3.5" cy="3.5" r="2.45" fill="none" stroke="#1f78e0" stroke-width="1.7" stroke-dasharray="1.2 .72"/><circle cx="3.5" cy="3.5" r="1.85" fill="none" stroke="#1f78e0" stroke-width="1.1"/></svg><span class="abs" style="left:19px;top:.4px;line-height:9px;font-size:6.9px">Plus</span><i class="dd" style="left:38px;top:4px"></i></div>
<div class="btn" style="left:52.6px;top:48px;width:178.6px;height:10.8px;line-height:9px">1.00 - 10 ms</div>
</div>
<!-- CAPTURE -->
<div class="hdr" style="top:141.5px;height:12px;line-height:13.1px"><span>Capture</span><svg class="chev" viewBox="0 0 5 6"><path d="M.6 2.7L2.5 .8 4.4 2.7M.6 5.2L2.5 3.3 4.4 5.2"/></svg></div>
<div class="pan" style="top:153.5px;height:62.5px">
<div class="btn" style="left:4px;top:3.2px;width:208.5px;height:10.6px;text-align:left;color:#222;line-height:8.8px;padding-left:1.2px;background:#d8e5f7;font-size:6.5px">2019-07-12-1956_6-L</div>
<div class="btn" style="left:216.8px;top:3.2px;width:14.4px;height:10.4px"><svg class="abs" style="left:3px;top:2px" width="7.5" height="5.5" viewBox="0 0 7.5 5.5"><rect x=".2" y="1" width="7.1" height="4.3" rx=".6" fill="#5d6f8a"/><rect x="2.3" y=".2" width="2.4" height="1.2" fill="#5d6f8a"/><circle cx="3.75" cy="3.1" r="1.45" fill="#b9c6da"/><circle cx="3.75" cy="3.1" r=".8" fill="#4a5a74"/></svg></div>
<div class="btn" style="left:4px;top:16.2px;width:120.4px;height:14.8px"><span class="abs" style="left:37px;top:1.1px;width:11.6px;height:11.6px;border-radius:50%;background:linear-gradient(#7a5a3a,#c49a6a 22%,#e8d0a8 34%,#a87848 46%,#f0dcb8 56%,#b08050 68%,#8a6440 82%,#5c4028);box-shadow:inset 0 0 1.5px 1px rgba(60,40,20,.75)"></span><span class="abs" style="left:51.3px;top:2.4px;line-height:9px">Jupiter _c8</span></div>
<div class="btn" style="left:127.9px;top:16.2px;width:103.3px;height:14.8px"><span class="abs" style="left:42px;top:.6px;width:11px;height:12.2px;border-radius:50%;background:radial-gradient(circle at 50% 45%,#fff 55%,#d8d8d8 75%,#a8a8a8);box-shadow:inset 0 0 1px .5px rgba(120,120,120,.7)"></span><span class="abs" style="left:56.6px;top:2.4px;line-height:9px">L</span></div>
<div class="btn" style="left:4px;top:34px;width:178px;height:10.4px;line-height:8.6px">Limite: 90s</div>
<div class="btn" style="left:185.7px;top:34px;width:45.5px;height:10.4px;line-height:8.6px">SER</div>
<div class="btn" style="left:4px;top:46.1px;width:146.3px;height:12.6px"><svg class="abs" style="left:66.3px;top:.3px" width="11" height="11" viewBox="0 0 11 11"><path d="M.8 .3L10.3 5.3 .8 10.6Z" fill="#f01208"/></svg></div>
<div class="btn" style="left:154.5px;top:46.1px;width:27.5px;height:12.6px;opacity:.75"><span class="abs" style="left:9.4px;top:2.2px;width:2.6px;height:7px;background:#a4b6d4"></span><span class="abs" style="left:13.8px;top:2.2px;width:2.6px;height:7px;background:#a4b6d4"></span></div>
<div class="btn" style="left:185.7px;top:46.1px;width:45.5px;height:12.6px;opacity:.6"><span class="abs" style="left:18px;top:2.3px;width:6.2px;height:6.2px;background:#d8e4f6;border-radius:1px"></span></div>
</div>
<!-- STATUT -->
<div class="hdr" style="top:220.5px"><span>Statut</span><svg class="chev" viewBox="0 0 5 6"><path d="M.6 2.7L2.5 .8 4.4 2.7M.6 5.2L2.5 3.3 4.4 5.2"/></svg></div>
<div class="pan" style="top:232px;height:35px">
<div class="t" style="left:3.3px;top:2.8px">im/s (max/réel)</div>
<div class="t b" style="right:85.9px;top:2.8px">108.74</div><div class="t b" style="right:2.5px;top:2.8px">104.17</div>
<div class="t" style="left:3.3px;top:12.4px">Capturé / Sauvé</div>
<div class="t b" style="right:85.9px;top:12.4px">57</div><div class="t b" style="right:2.5px;top:12.4px">57</div>
<div class="t" style="left:3.3px;top:24.2px">Mémoire</div>
<div class="bar" style="left:32.1px;top:24.7px;width:78px;background:#dedb7a;border-color:#b9b884"><i style="position:absolute;left:.6px;top:.4px;width:2.6px;height:5.8px;background:#f2c32c"></i>182 Mo</div>
<div class="t" style="left:128.2px;top:24.2px">Disque</div>
<div class="bar" style="left:153px;top:24.7px;width:78px;background:linear-gradient(#93e162,#7cd64a 50%,#70cf40);border-color:#8fc474">269 Go</div>
</div>
<!-- HISTOGRAMME -->
<div class="hdr" style="top:271px;height:12px;line-height:13.1px"><span>Histogramme</span><svg class="chev" viewBox="0 0 5 6"><path d="M.6 2.7L2.5 .8 4.4 2.7M.6 5.2L2.5 3.3 4.4 5.2"/></svg></div>
<div class="pan" style="top:283px;height:46.5px">
<svg class="abs" style="left:3.5px;top:2px" width="228" height="42" viewBox="0 0 228 42">
<rect width="228" height="42" fill="#000"/>
<path fill="#6a8cff" d="M0 42 L0 37.2 L0.8 36.6 L1.5 41.4 L2.3 40 L3.2 36.2 L4.4 33.6 L5.4 32 L6.4 29.6 L7.5 27.8 L8.6 26.4 L9.8 25.7 L10.8 25.5 L11.8 26.4 L12.8 27 L13.8 28.1 L14.8 29.3 L15.8 30.4 L17 31.6 L18.2 32.6 L19.5 33 L20.5 33.01 L21.8 33.2 L23.1 33.05 L24.4 33.19 L25.7 33.18 L27 32.76 L28.3 32.7 L29.6 33.25 L30.9 32.82 L32.2 32.77 L33.5 33.28 L34.8 32.89 L36.1 33.12 L37.4 32.84 L38.7 32.93 L40 32.56 L41.3 32.87 L42.6 33.01 L43.9 32.75 L45.2 32.87 L46.5 32.8 L47.8 32.35 L49.1 32.81 L50.4 32.66 L51.7 32.44 L53 32.22 L54.3 32.78 L55.6 32.48 L56.9 32.63 L58.2 32.71 L59.5 32.57 L60.8 32.69 L62.1 32.3 L63.4 32.56 L64.7 32.28 L66 32.6 L67.3 32.53 L68.6 31.96 L69.9 31.96 L71.2 31.99 L72.5 32.49 L73.8 32.1 L75.1 32.2 L76.4 31.95 L77.7 32.07 L79 31.96 L80.3 31.91 L81.6 32.05 L82.9 32.02 L84.2 32.22 L85.5 32.04 L86.8 32.22 L88.1 32.21 L89.4 32.34 L90.7 32.15 L92 31.83 L93.3 32.36 L94.6 32.47 L95.9 32.46 L97.2 32.26 L98.5 32.4 L99.8 32.09 L101.1 32.56 L102.4 32.41 L103.7 32.25 L105 32.13 L106.3 32.72 L107.6 32.85 L108.9 32.26 L110.2 32.79 L111.5 32.55 L112.8 32.41 L114.1 32.55 L115.4 32.92 L116.7 33.02 L118 32.48 L120 33.4 L123 34.2 L126 35.2 L129 36.6 L132 38 L135 39.6 L137.5 41 L139.6 41.3 L140 42Z"/>
<text x="5.2" y="7.6" font-family="Liberation Sans, sans-serif" font-size="6.1" fill="#6484e8" xml:space="preserve" letter-spacing="-0.1">0/156 (61%)  Unique: 156</text>
</svg>
</div>
<!-- OPTIONS -->
<div class="hdr" style="top:334.7px"><span>Options</span><svg class="chev" viewBox="0 0 5 6"><path d="M.6 2.7L2.5 .8 4.4 2.7M.6 5.2L2.5 3.3 4.4 5.2"/></svg></div>
<div class="pan" style="top:346.2px;height:96px">
<div class="cb ck" style="left:5.8px;top:4.2px"></div><div class="t" style="left:15.8px;top:3.6px">Histogramme</div>
<div class="cb" style="left:5.8px;top:15.6px"></div><div class="t" style="left:15.8px;top:15px">Autoalignement</div>
<div class="cb" style="left:5.8px;top:27px"></div><div class="t" style="left:15.8px;top:26.4px">Réticule</div>
<div class="cb" style="left:5.8px;top:38.5px"></div><div class="t" style="left:15.8px;top:37.9px">Recadrage</div>
<div class="cb" style="left:5.8px;top:49.9px"></div><div class="t" style="left:15.8px;top:49.3px">Dark</div>
<div class="cb" style="left:5.8px;top:61.4px"></div><div class="t" style="left:15.8px;top:60.8px">Inversion X</div>
<div class="cb" style="left:5.8px;top:72.8px"></div><div class="t" style="left:15.8px;top:72.2px">Débayerisation</div>
<div class="cb" style="left:5.8px;top:84.2px"></div><div class="t" style="left:15.8px;top:83.6px">Négatif</div>
<div class="cb" style="left:111.6px;top:4.2px"></div><div class="t" style="left:121.4px;top:3.6px">Éphémérides</div>
<div class="cb" style="left:111.6px;top:15.6px"></div><div class="t" style="left:121.4px;top:15px">Boîte d'alignement</div>
<div class="cb" style="left:111.6px;top:27px"></div><div class="t" style="left:121.4px;top:26.4px">Aide à la mise au point</div>
<div class="cb ck" style="left:111.6px;top:38.5px"></div><div class="t" style="left:121.4px;top:37.9px">Autoguidage</div>
<div class="cb" style="left:111.6px;top:49.9px"></div><div class="t" style="left:121.4px;top:49.3px">Flat</div>
<div class="cb" style="left:111.6px;top:61.4px"></div><div class="t" style="left:121.4px;top:60.8px">Inversion Y</div>
<div class="cb" style="left:111.6px;top:72.8px"></div><div class="t" style="left:121.4px;top:72.2px">Dérotation</div>
</div>
<!-- PARAMETRES -->
<div class="hdr" style="top:446px"><span>Paramètres</span><svg class="chev" viewBox="0 0 5 6"><path d="M.6 2.7L2.5 .8 4.4 2.7M.6 5.2L2.5 3.3 4.4 5.2"/></svg></div>
<div class="pan" style="top:458px;height:22.5px;background:linear-gradient(#d6e4f7 60%,#c6dafa)">
<div class="btn" style="left:3.9px;top:3px;width:37.4px;height:11.2px"><svg class="abs" style="left:13px;top:.8px" width="9" height="8.5" viewBox="0 0 9 8.5"><rect x=".4" y=".3" width="5" height="6" rx="1.2" fill="#e8e8e8" stroke="#bbb" stroke-width=".4"/><rect x="3" y="3" width="5.4" height="5" rx=".6" fill="#5b8bd8"/><rect x="4" y="3.4" width="3.4" height="1.6" fill="#dfe9f8"/><rect x="4.2" y="6" width="3" height="1.6" fill="#8fd06a"/></svg><i class="dd" style="left:31px;top:4.3px"></i></div>
<div class="btn" style="left:42px;top:3px;width:37.5px;height:11.2px"><svg class="abs" style="left:12.8px;top:.3px" width="9.4" height="9.4" viewBox="0 0 9.4 9.4"><circle cx="4.7" cy="4.7" r="3.2" fill="#d9a070"/><circle cx="4.7" cy="4.7" r="3.2" fill="none" stroke="#b06a3a" stroke-width=".4"/><path d="M4.7 .2V9.2M.2 4.7H9.2" stroke="#f01818" stroke-width=".9"/></svg><i class="dd" style="left:31px;top:4.3px"></i></div>
<div class="btn" style="left:80.4px;top:3px;width:37.2px;height:11.2px"><span class="abs" style="left:13px;top:.9px;width:7.6px;height:7.6px;border-radius:50%;background:conic-gradient(#f44,#fd4,#4d4,#4dd,#46f,#d4d,#f44)"><span class="abs" style="left:1.8px;top:1.8px;width:4px;height:4px;border-radius:50%;background:radial-gradient(#fff,rgba(255,255,255,0))"></span></span><i class="dd" style="left:31px;top:4.3px"></i></div>
<div class="btn" style="left:118.5px;top:3px;width:37.5px;height:11.2px"><svg class="abs" style="left:13.2px;top:.4px" width="8" height="8.6" viewBox="0 0 8 8.6"><rect x=".4" y=".3" width="6.6" height="8" rx="1" fill="#eef2f8" stroke="#9ab" stroke-width=".4"/><rect x="2.2" y="2.4" width="4.6" height="5.6" rx=".8" fill="#3e7ad6"/><rect x="3.9" y="3.4" width="1.1" height="3.6" fill="#fff"/></svg><i class="dd" style="left:31px;top:4.3px"></i></div>
<div class="btn" style="left:156.6px;top:3px;width:37.2px;height:11.2px"><svg class="abs" style="left:12.4px;top:1.4px" width="9.5" height="6.5" viewBox="0 0 9.5 6.5"><path d="M.3 6.2C.3 2.6 2.2 .4 4.75 .4S9.2 2.6 9.2 6.2Z" fill="#4a4040"/><path d="M2 4.4h5.4" stroke="#8a5a5a" stroke-width=".8"/></svg><i class="dd" style="left:31px;top:4.3px"></i></div>
<div class="btn" style="left:194.7px;top:3px;width:37.2px;height:11.2px"><svg class="abs" style="left:11.4px;top:.5px" width="9.6" height="8.6" viewBox="0 0 9.6 8.6"><ellipse cx="4.8" cy="4.3" rx="4.4" ry="1.5" transform="rotate(-38 4.8 4.3)" fill="none" stroke="#3a3a3a" stroke-width=".7"/><circle cx="4.8" cy="4.3" r="2.3" fill="#e8c838"/><circle cx="4.8" cy="4.3" r="2.3" fill="none" stroke="#a08818" stroke-width=".3"/></svg><i class="dd" style="left:31px;top:4.3px"></i></div>
<div class="t" style="left:6px;top:14.2px;font-style:italic;font-size:6.55px;color:#3458a8">© Torsten Edelmann</div>
</div>
</div>
<!--/FC-->
<!--QHY-->
<div id="qhy">
<div class="title">
<svg class="abs" style="left:3.6px;top:4.6px" width="8.5" height="6.5" viewBox="0 0 8.5 6.5"><ellipse cx="5.4" cy="2.9" rx="2.9" ry="2.3" fill="#b9b4ac"/><circle cx="2.7" cy="3.4" r="2.4" fill="#0c0c0c"/></svg>
<div class="abs" style="left:14.6px;top:3px;font-size:6.15px;line-height:10px;color:#a0a0a0;letter-spacing:-0.05px">QHY5LII-C</div>
<svg class="abs" style="left:505px;top:2px" width="62" height="12" viewBox="0 0 62 12" fill="none" stroke="#9c9c9c" stroke-width=".75"><path d="M4.6 5.6h5.6"/><rect x="28.3" y="3" width="5" height="5"/><path d="M52 3l5 5.2M57 3l-5 5.2"/></svg>
</div>
<!-- top toolbar -->
<div class="btn" style="left:33.5px;top:18.2px;width:37px;height:11.4px;line-height:10.4px;font-size:5.9px;color:#2a4288">MAX</div>
<div class="btn" style="left:74.5px;top:18.2px;width:17.6px;height:11.4px"><svg class="abs" style="left:3.6px;top:1.3px" width="9.4" height="7" viewBox="0 0 9.4 7"><rect x=".2" y=".2" width="9" height="5.6" fill="#2d3138"/><rect x="1" y=".9" width="3.3" height="4.2" fill="#3aa0f0"/><rect x="5.1" y=".9" width="3.3" height="4.2" fill="#3aa0f0"/><path d="M4.3 3h.8" stroke="#bfe0ff" stroke-width=".6"/><rect x="3.3" y="5.9" width="2.8" height=".7" fill="#777"/></svg></div>
<div class="btn" style="left:96.2px;top:18.2px;width:17.6px;height:11.4px"><svg class="abs" style="left:3.6px;top:1.3px" width="9.4" height="7" viewBox="0 0 9.4 7"><rect x=".2" y=".2" width="9" height="5.6" fill="#5a5e66"/><rect x="1" y=".9" width="7.4" height="4.2" fill="#4a9be6"/><circle cx="7" cy="4.3" r="1.5" fill="#dfe6ee"/><rect x="3.3" y="5.9" width="2.8" height=".7" fill="#777"/></svg></div>
<div class="btn" style="left:117.3px;top:18.2px;width:38.1px;height:11.4px;line-height:9.6px;font-size:6.35px;color:#2a4288"><svg class="abs" style="left:5.5px;top:2.4px" width="5" height="5" viewBox="0 0 5 5" fill="none" stroke="#8e98a8" stroke-width=".7"><circle cx="3.1" cy="1.9" r="1.4"/><path d="M2.1 2.9L.4 4.6"/></svg><span class="abs" style="left:15.6px;top:0">148 %</span></div>
<div class="sl" style="left:164.7px;top:22.3px;width:53.3px;border-color:#a3b7dc"></div><div class="th" style="left:186.2px;top:20.2px"></div>
<svg class="abs" style="left:232px;top:22px" width="5" height="5" viewBox="0 0 5 5" fill="none" stroke="#8e98a8" stroke-width=".7"><circle cx="3.1" cy="1.9" r="1.4"/><path d="M2.1 2.9L.4 4.6"/></svg>
<div class="t" style="left:238.6px;top:20.3px;font-size:6.7px;color:#2a4288">50%</div>
<svg class="abs" style="left:262px;top:22px" width="5" height="5" viewBox="0 0 5 5" fill="none" stroke="#8e98a8" stroke-width=".7"><circle cx="3.1" cy="1.9" r="1.4"/><path d="M2.1 2.9L.4 4.6"/></svg>
<div class="t" style="left:269.2px;top:20.3px;font-size:6.7px;color:#2a4288">100%</div>
<svg class="abs" style="left:294px;top:22px" width="5" height="5" viewBox="0 0 5 5" fill="none" stroke="#8e98a8" stroke-width=".7"><circle cx="3.1" cy="1.9" r="1.4"/><path d="M2.1 2.9L.4 4.6"/></svg>
<div class="t" style="left:301.2px;top:20.3px;font-size:6.7px;color:#2a4288">200%</div>
<!-- runner -->
<svg class="abs" style="left:325.5px;top:18.7px" width="11.8" height="11.2" viewBox="0 0 11.8 11.2"><defs><linearGradient id="rn" x1="0" y1="0" x2="1" y2="1"><stop offset="0" stop-color="#3a58b8"/><stop offset="1" stop-color="#1c2f80"/></linearGradient></defs><rect width="11.8" height="11.2" fill="url(#rn)"/><circle cx="7.6" cy="2.1" r="1.1" fill="#fff"/><path d="M7 3.3L4.6 4.2 3.6 6M7 3.3L6 6.2 7.8 7.6 7.2 10M6 6.2L4.4 8.2 2.2 9.4M7 3.8L8.8 5.2 10 4.6" fill="none" stroke="#fff" stroke-width="1" stroke-linecap="round" stroke-linejoin="round"/></svg>
<!-- clock -->
<svg class="abs" style="left:344.7px;top:18.6px" width="12" height="11.4" viewBox="0 0 12 11.4"><rect width="12" height="11.4" fill="#2a4aa0"/><circle cx="6" cy="5.7" r="4" fill="#e8eef8" stroke="#dfe6f4" stroke-width=".4"/><circle cx="6" cy="5.7" r="4.7" fill="none" stroke="#fff" stroke-width=".8" stroke-dasharray="22 7.5" transform="rotate(150 6 5.7)"/><path d="M6 3.2V5.9L7.8 6.8" fill="none" stroke="#1c2f80" stroke-width=".8"/><path d="M.8 5l1.2 2 1.4-1.8Z" fill="#fff"/></svg>
<!-- terminal -->
<svg class="abs" style="left:364.2px;top:18.8px" width="11.4" height="11" viewBox="0 0 11.4 11"><rect width="11.4" height="11" rx=".6" fill="#9a9a9a"/><rect x=".5" y=".5" width="10.4" height="9.4" fill="#0a0a0a"/><path d="M3 3.6l1.6 1.2L3 6M5.2 6.3h1.8" fill="none" stroke="#9a9a9a" stroke-width=".6"/></svg>
<svg class="abs" style="left:385.8px;top:21.8px" width="6.4" height="6.4" viewBox="0 0 6.4 6.4"><path d="M3.2 .4V6M.4 3.2H6" stroke="#2444a0" stroke-width="1.2"/></svg>
<!-- tooltip -->
<div class="abs" style="left:335.4px;top:35.6px;width:39.6px;height:9.6px;background:#c9ced8;border-radius:1px;box-shadow:1px 1.2px 1.2px rgba(60,60,70,.55);color:#2a4288;font-size:6.4px;line-height:9.6px;text-align:center">Séquenceur</div>
<!-- camera image -->
<div class="abs" style="left:33.5px;top:33.3px;width:286.5px;height:265.2px;background:#0a0a0a;overflow:hidden">
<div class="abs" style="left:0;top:0;width:286.5px;height:265.2px;background:radial-gradient(ellipse 101px 95px at 148.5px 129.5px,#6e6e6e 0,#6c6c6c 58%,#686868 74%,#5c5c5c 82%,#474747 88%,#2c2c2c 93.5%,#161616 97.5%,#0d0d0d 100%,#0a0a0a 106%)"></div>
<div class="abs" style="left:0;top:0;width:286.5px;height:265.2px;background:radial-gradient(ellipse 80px 40px at 150px 85px,rgba(255,255,255,.05),rgba(255,255,255,0))"></div>
<svg class="abs" style="left:0;top:0;opacity:.07" width="287" height="266"><filter id="nz"><feTurbulence type="fractalNoise" baseFrequency="0.85" numOctaves="2" seed="4"/><feColorMatrix type="saturate" values="0"/></filter><rect width="287" height="266" filter="url(#nz)"/></svg>
<div class="abs" style="left:5px;top:1.2px;font-size:5.9px;line-height:8px;color:#e21414;white-space:pre;letter-spacing:-0.1px">Zoom: 148%   Autoguidage</div>
<svg class="abs" style="left:152.2px;top:127.4px" width="6" height="6" viewBox="0 0 6 6"><path d="M3 .3V5.7M.3 3H5.7" stroke="#d81818" stroke-width=".7"/></svg>
<!-- N E W S arrows -->
<svg class="abs" style="left:240px;top:3px" width="40" height="42" viewBox="0 0 40 42" font-family="Liberation Sans, sans-serif" font-size="4.7" font-weight="bold" font-style="italic" text-anchor="middle">
<g fill="#1a4020" stroke="#24502a" stroke-width=".5">
<path d="M20 1.4L26 7.4H23.3V13.4H16.7V7.4H14Z"/>
<path d="M20 40.6L26 34.6H23.3V28.4H16.7V34.6H14Z"/>
<path d="M1.6 21L7.6 15V17.7H13.8V24.3H7.6V27Z"/>
<path d="M38.8 21L32.8 15V17.7H26.6V24.3H32.8V27Z"/>
</g>
<g fill="#081008"><text x="20" y="12">N</text><text x="20" y="33.6">S</text><text x="10.6" y="22.7">E</text><text x="30" y="22.7">W</text></g>
</svg>
</div>
<!-- left toolbar -->
<div class="cb ck q" style="left:3.2px;top:34.4px"></div>
<svg class="abs" style="left:12.4px;top:34px" width="9.4" height="9" viewBox="0 0 9.4 9"><defs><linearGradient id="hg" x1="0" y1="0" x2="0" y2="1"><stop offset="0" stop-color="#5a86e0"/><stop offset="1" stop-color="#2f5cc0"/></linearGradient></defs><path d="M.5 8.500V6H1.700V4H2.900V2.200H3.700V.8H5.500V2.200H6.500V4H7.700V6H8.900V8.500Z" fill="url(#hg)"/><path d="M1.700 6V8.500M2.900 4V8.500M3.700 2.200V8.500M5.500 2.200V8.500M6.500 4V8.500M7.700 6V8.500" stroke="#8fb0f0" stroke-width=".3"/><path d="M0 8.700H9.400" stroke="#9a9a9a" stroke-width=".5"/></svg>
<i class="dd" style="left:23.4px;top:37.6px"></i>
<div class="cb q" style="left:3.2px;top:48.3px"></div>
<svg class="abs" style="left:12.2px;top:47.4px" width="9.8" height="9.8" viewBox="0 0 9.8 9.8"><circle cx="4.9" cy="4.9" r="3.3" fill="#dca272"/><circle cx="4.9" cy="4.9" r="3.3" fill="none" stroke="#a86838" stroke-width=".4"/><path d="M4.9 .2V9.6M.2 4.9H9.6" stroke="#f01818" stroke-width=".9"/></svg>
<i class="dd" style="left:23.4px;top:51.5px"></i>
<div class="cb q" style="left:3.2px;top:62.6px"></div>
<svg class="abs" style="left:12.6px;top:62.4px" width="9" height="8.8" viewBox="0 0 9 8.8"><path d="M1 .6L7.4 6.4M8 .6L1.6 6.4" stroke="#8a97a8" stroke-width="1.1"/><ellipse cx="1.9" cy="6.9" rx="1.7" ry="1.4" fill="#2f6fd0"/><ellipse cx="7.1" cy="6.9" rx="1.7" ry="1.4" fill="#2f6fd0"/></svg>
<div class="cb q" style="left:3.2px;top:76.5px"></div>
<div class="abs" style="left:13.4px;top:74.6px;font-size:8.6px;line-height:10px;color:#5ba3ea;letter-spacing:-0.6px">2ↆ</div>
<div class="cb ck q" style="left:3.2px;top:90.6px"></div>
<svg class="abs" style="left:12.6px;top:90.2px" width="9" height="9" viewBox="0 0 9 9" fill="#5cbb3a" stroke="#3b8c22" stroke-width=".35"><path d="M4.5 .3L6.1 2.3H2.9ZM4.5 8.7L6.1 6.7H2.9ZM.3 4.5L2.3 2.9V6.1ZM8.7 4.5L6.7 2.9V6.1Z"/><circle cx="4.5" cy="4.5" r=".8" fill="#fff" stroke="none"/></svg>
<i class="dd" style="left:23.4px;top:93.8px"></i>
<!-- buildings -->
<svg class="abs" style="left:11.4px;top:104.2px" width="9.2" height="9" viewBox="0 0 9.2 9"><rect x=".4" y="1" width="3.6" height="7.4" fill="#6a7288" stroke="#454c60" stroke-width=".4"/><rect x="4.6" y="2" width="4.2" height="6.4" fill="#8f96aa" stroke="#454c60" stroke-width=".4"/><path d="M1.4 2.4V7.6M2.8 2.4V7.6M5.8 3.2V7.6M7.4 3.2V7.6" stroke="#c8cede" stroke-width=".5"/></svg>
<!-- blue folder -->
<svg class="abs" style="left:11.6px;top:118.6px" width="8.6" height="7.8" viewBox="0 0 8.6 7.8"><path d="M.6 1.4L7.6 .4 8.2 6 1.2 7.4Z" fill="#8db4f4"/><path d="M.6 2.4L7 1.6 8.2 6 1.2 7.4Z" fill="#6c9cf0"/><path d="M.9 3.2L7.4 2.6 8 6 1.3 7.2Z" fill="#a9c6fa"/></svg>
<!-- trash -->
<svg class="abs" style="left:11.8px;top:132px" width="8.4" height="9.6" viewBox="0 0 8.4 9.6"><path d="M1.2 2.8H7.2L6.8 9.2H1.6Z" fill="#7c7c7c" stroke="#2c2c2c" stroke-width=".6"/><path d="M.4 2.4H8M2.8 2.2L3.2 .8H5.2L5.6 2.2" fill="none" stroke="#2c2c2c" stroke-width=".8"/><path d="M3 4V8M4.2 4V8M5.4 4V8" stroke="#2c2c2c" stroke-width=".5"/></svg>
<!-- red square black -->
<svg class="abs" style="left:11px;top:146px" width="9.6" height="10" viewBox="0 0 9.6 10"><rect x="1" y="1.4" width="7.6" height="7.2" fill="#141414" stroke="#e01010" stroke-width=".8"/><path d="M4.8 0V10M0 5H9.6" stroke="#e01010" stroke-width=".5"/></svg>
<!-- red square jupiter -->
<svg class="abs" style="left:11px;top:159.8px" width="9.6" height="10" viewBox="0 0 9.6 10"><rect x="1" y="1.4" width="7.6" height="7.2" fill="#141414" stroke="#e01010" stroke-width=".8"/><path d="M4.8 0V10M0 5H9.6" stroke="#e01010" stroke-width=".5"/><circle cx="4.8" cy="5" r="2.5" fill="#f0c8a0"/><circle cx="4.6" cy="5.2" r="1.2" fill="#e8743a"/></svg>
<!-- color grid -->
<div class="cb q" style="left:3.2px;top:174.7px"></div>
<svg class="abs" style="left:12.6px;top:174.2px" width="8.6" height="9" viewBox="0 0 8.6 9"><g><rect x=".2" y=".2" width="2.4" height="2.5" fill="#e23ad8"/><rect x="3.1" y=".2" width="2.4" height="2.5" fill="#50c83c"/><rect x="6" y=".2" width="2.4" height="2.5" fill="#3aa83c"/><rect x=".2" y="3.2" width="2.4" height="2.5" fill="#20b8f0"/><rect x="3.1" y="3.2" width="2.4" height="2.5" fill="#f0c020"/><rect x="6" y="3.2" width="2.4" height="2.5" fill="#e03030"/><rect x=".2" y="6.2" width="2.4" height="2.5" fill="#f0d020"/><rect x="3.1" y="6.2" width="2.4" height="2.5" fill="#3050d0"/><rect x="6" y="6.2" width="2.4" height="2.5" fill="#8030c0"/></g></svg>
<i class="dd" style="left:23.4px;top:178px"></i>
<!-- rgb circles -->
<div class="cb q" style="left:3.2px;top:188.8px"></div>
<svg class="abs" style="left:12px;top:187.4px" width="10" height="10.4" viewBox="0 0 10 10.4"><circle cx="5" cy="3.6" r="3.2" fill="#f03030" opacity=".9"/><circle cx="3.4" cy="6.6" r="3.2" fill="#3060f0" opacity=".85"/><circle cx="6.6" cy="6.6" r="3.2" fill="#30d040" opacity=".85"/><circle cx="5" cy="5.6" r="1.5" fill="#fff" opacity=".9"/></svg>
<i class="dd" style="left:23.4px;top:192px"></i>
<!-- black rect -->
<div class="cb q" style="left:3.2px;top:203px"></div>
<div class="abs" style="left:13px;top:203.6px;width:7.6px;height:5.8px;background:#000"></div>
<!-- gray bar -->
<div class="cb q" style="left:3.2px;top:217px"></div>
<svg class="abs" style="left:12.8px;top:217.4px" width="8.2" height="6.6" viewBox="0 0 8.2 6.6"><rect x=".3" y=".3" width="7.6" height="6" rx=".6" fill="#3a3a3a"/><rect x="1" y="1" width="6.2" height="2.2" fill="#d4d4d4"/></svg>
<!-- green globe -->
<div class="cb q" style="left:3.2px;top:231px"></div>
<svg class="abs" style="left:12.2px;top:229.8px" width="9.6" height="9.6" viewBox="0 0 9.6 9.6"><circle cx="4.8" cy="4.8" r="4.3" fill="#a8c070" stroke="#6c8a3c" stroke-width=".5"/><circle cx="4.8" cy="4.8" r="2.2" fill="none" stroke="#6c8a3c" stroke-width=".4"/><path d="M4.8 .6V9M.6 4.8H9" stroke="#6c8a3c" stroke-width=".4"/></svg>
<i class="dd" style="left:23.4px;top:234.2px"></i>
<!-- film -->
<div class="cb q" style="left:3.2px;top:245.4px"></div>
<svg class="abs" style="left:12.8px;top:245.8px" width="8.4" height="6.8" viewBox="0 0 8.4 6.8"><rect x=".2" y=".2" width="8" height="6.4" rx=".8" fill="#3c3c3c"/><rect x="1.3" y="1.6" width="1.3" height="3.2" fill="#ddd"/><rect x="3.5" y="1.6" width="1.3" height="3.2" fill="#ddd"/><rect x="5.7" y="1.6" width="1.3" height="3.2" fill="#ddd"/></svg>
<!-- balls -->
<div class="ball" style="top:257.4px;background:radial-gradient(circle at 50% 22%,#ffb0a8 0,#f82020 38%,#d80808 70%,#a00000)"></div>
<div class="ball" style="top:271.6px;background:radial-gradient(circle at 50% 22%,#b8ffb0 0,#28e028 38%,#10c010 70%,#088008)"></div>
<div class="ball" style="top:285.7px;background:radial-gradient(circle at 50% 22%,#a8b8ff 0,#2030f0 38%,#0818d0 70%,#000890)"></div>
<div class="ball" style="top:300px;background:radial-gradient(circle at 50% 30%,#fff 0,#fff 50%,#dcdcdc 78%,#a8a8a8)"></div>
<div class="ball" style="top:313.7px;background:radial-gradient(circle at 50% 22%,#e08888 0,#b81818 38%,#a00808 70%,#700000)"></div>
<svg class="abs" style="left:11.8px;top:330.9px" width="6.4" height="6.4" viewBox="0 0 6.4 6.4"><path d="M3.2 .4V6M.4 3.2H6" stroke="#2444a0" stroke-width="1.2"/></svg>
</div>
<!--/QHY-->
<!--TASKBAR-->
<div id="tb">
<svg class="abs" style="left:7.8px;top:5.8px" width="9.6" height="9.6" viewBox="0 0 9.6 9.6" fill="#fff"><path d="M0 1.3L3.9 .8V4.5H0ZM4.5 .7L9.6 0V4.5H4.5ZM0 5.1H3.9V8.8L0 8.3ZM4.5 5.1H9.6V9.6L4.5 8.9Z"/></svg>
<div class="abs" style="left:24.8px;top:.6px;width:179.4px;height:20.4px;background:#f1f1f1"></div>
<div class="abs" style="left:30px;top:5.4px;width:9.6px;height:9.6px;box-sizing:border-box;border:1.55px solid #151515;border-radius:50%"></div>
<div class="abs" style="left:45.8px;top:6.2px;font-size:7.7px;line-height:10px;color:#303030;white-space:nowrap;letter-spacing:-0.05px">Taper ici pour rechercher</div>
<svg class="abs" style="left:190.4px;top:5.8px" width="6" height="9.4" viewBox="0 0 6 9.4"><rect x="1.6" y=".3" width="2.8" height="5" rx="1.4" fill="#3a3a3a"/><path d="M.5 3.8C.5 7 5.5 7 5.5 3.8M3 6.4V8.6M1.6 8.8H4.4" fill="none" stroke="#3a3a3a" stroke-width=".7"/></svg>
<!-- task view -->
<svg class="abs" style="left:212.2px;top:6.2px" width="8.6" height="8.6" viewBox="0 0 8.6 8.6" fill="none" stroke="#e8e8e8" stroke-width=".8"><rect x="1.6" y="2.2" width="4.6" height="4.2"/><path d="M.4 1V.4H1.4M.4 7.6V8.2H1.4M6.6 .4H7.4V1.4M6.6 8.2H7.4V7.2M7.8 2.6V6"/></svg>
<!-- edge -->
<div class="abs" style="left:237.8px;top:-.4px;font-size:18.5px;line-height:19px;font-weight:bold;color:#1f8fe8;font-family:'Liberation Sans',sans-serif">e</div>
<!-- explorer -->
<svg class="abs" style="left:262.8px;top:5.4px" width="11.8" height="9.8" viewBox="0 0 11.8 9.8"><path d="M.3 .6H4.6L5.6 1.8H11.5V9.4H.3Z" fill="#f2c544"/><path d="M.3 3H11.5V9.4H.3Z" fill="#fbdc74"/><rect x="3.4" y="6" width="5" height="3.4" fill="#3a9be8"/><rect x="4.4" y="7.2" width="3" height="2.2" fill="#fbdc74"/></svg>
<!-- computer -->
<svg class="abs" style="left:287.4px;top:4px" width="13" height="12.6" viewBox="0 0 13 12.6"><rect x="2.6" y=".4" width="9.8" height="7.4" rx=".6" fill="#dfe6ee"/><rect x="3.4" y="1.2" width="8.2" height="5.6" fill="#3a8ae0"/><rect x=".4" y="2.6" width="8.6" height="6.4" rx=".6" fill="#c6d2de"/><rect x="1.2" y="3.4" width="7" height="4.6" fill="#5aa6f0"/><path d="M4 9V10.6M2.2 11H6.8" stroke="#c6d2de" stroke-width="1"/><ellipse cx="8" cy="11" rx="2.6" ry="1.2" fill="#b9c4d0"/></svg>
<!-- firefox -->
<div class="abs" style="left:313.4px;top:3.8px;width:12.6px;height:12.6px;border-radius:50%;background:radial-gradient(circle at 48% 55%,#3a3ac0 0,#5a2ac8 28%,#e83c1c 34%,#f8701c 60%,#fcae1c 82%,#fce04a 100%)"></div>
<!-- store -->
<svg class="abs" style="left:339px;top:3.8px" width="12.4" height="12.6" viewBox="0 0 12.4 12.6"><path d="M3.8 3.4V2.4C3.8 .2 8.6 .2 8.6 2.4V3.4" fill="none" stroke="#f2f2f2" stroke-width=".8"/><path d="M.4 3.4H12L11.2 12.2H1.2Z" fill="#f4f4f4"/><rect x="3.6" y="5.2" width="2.3" height="2.3" fill="#f25022"/><rect x="6.5" y="5.2" width="2.3" height="2.3" fill="#7fba00"/><rect x="3.6" y="8.1" width="2.3" height="2.3" fill="#00a4ef"/><rect x="6.5" y="8.1" width="2.3" height="2.3" fill="#ffb900"/></svg>
<!-- calculator -->
<svg class="abs" style="left:365.8px;top:3.4px" width="10.2" height="13.4" viewBox="0 0 10.2 13.4"><rect x=".3" y=".3" width="9.6" height="12.8" rx=".6" fill="#f2f2f2"/><rect x="1.4" y="1.4" width="7.4" height="2.6" fill="#3a3a3a"/><g fill="#3a3a3a"><rect x="1.4" y="5.2" width="1.8" height="1.8"/><rect x="4.2" y="5.2" width="1.8" height="1.8"/><rect x="7" y="5.2" width="1.8" height="1.8"/><rect x="1.4" y="7.8" width="1.8" height="1.8"/><rect x="4.2" y="7.8" width="1.8" height="1.8"/><rect x="7" y="7.8" width="1.8" height="1.8"/><rect x="1.4" y="10.4" width="1.8" height="1.8"/><rect x="4.2" y="10.4" width="1.8" height="1.8"/><rect x="7" y="10.4" width="1.8" height="1.8"/></g></svg>
<!-- skype -->
<div class="abs" style="left:390.6px;top:4.2px;width:11.4px;height:11.4px;border-radius:40%;background:#12a5f4;color:#fff;font-size:9.6px;line-height:11.4px;font-weight:bold;text-align:center">S</div>
<!-- active app -->
<div class="abs" style="left:409.4px;top:0;width:24.8px;height:21px;background:#373737"></div>
<div class="abs" style="left:409.4px;top:19.6px;width:24.8px;height:1.4px;background:#7ab6f0"></div>
<svg class="abs" style="left:417px;top:7.2px" width="9" height="7" viewBox="0 0 8.5 6.5"><ellipse cx="5.4" cy="2.9" rx="2.9" ry="2.3" fill="#c4beb4"/><circle cx="2.7" cy="3.4" r="2.4" fill="#050505"/></svg>
<!-- tray -->
<svg class="abs" style="left:838.6px;top:6.2px" width="8.4" height="8.4" viewBox="0 0 8.4 8.4" fill="none" stroke="#e8e8e8" stroke-width=".7"><circle cx="5.8" cy="1.8" r="1.3"/><path d="M3.6 5.6C3.8 3.4 7.8 3.4 8 5.6"/><circle cx="2.6" cy="4" r="1.3"/><path d="M.4 8C.6 5.6 4.6 5.6 4.8 8"/></svg>
<svg class="abs" style="left:857.2px;top:9px" width="7.4" height="4" viewBox="0 0 7.4 4" fill="none" stroke="#f0f0f0" stroke-width=".8"><path d="M.5 3.6L3.7 .6 6.9 3.6"/></svg>
<svg class="abs" style="left:868.8px;top:7.6px" width="9.6" height="5.6" viewBox="0 0 9.6 5.6"><path d="M2 5.4C-.4 5.4 -.2 2.6 1.8 2.6 2 .2 5.6 -.2 6.4 2 8.6 1.4 10 3.400 9 5.4Z" fill="#f4f4f4"/></svg>
<svg class="abs" style="left:881.4px;top:7.4px" width="9.2" height="6" viewBox="0 0 9.2 6"><rect x="1.2" y="1" width="7.8" height="4.6" fill="#f0f0f0"/><rect x=".2" y=".2" width="2.6" height="2" fill="#f0f0f0"/><path d="M3 2.2V4.6M4.4 1.8V4.6" stroke="#111" stroke-width=".5"/></svg>
<svg class="abs" style="left:894.6px;top:6.6px" width="8" height="7.2" viewBox="0 0 8 7.2" fill="none" stroke="#9a9a9a" stroke-width=".8"><path d="M.6 6.8C.6 3.2 3.6 .6 7.4 .6M2.6 6.8C2.600 4.400 4.800 2.600 7.400 2.600M4.6 6.8C4.600 5.600 5.800 4.600 7.400 4.600"/><path d="M7.4 .4V7" stroke="#bbb" stroke-width=".5"/></svg>
<svg class="abs" style="left:905.8px;top:6.6px" width="8.6" height="7.4" viewBox="0 0 8.6 7.4" fill="none" stroke="#f0f0f0" stroke-width=".7"><path d="M.4 2.600H2L4 .6V6.8L2 4.8H.4Z"/><path d="M5.400 2.400C6 3.200 6 4.200 5.400 5M6.800 1.200C8 2.600 8 4.800 6.800 6.200"/></svg>
<div class="abs" style="left:920.4px;top:7.4px;font-size:5.8px;line-height:8px;color:#f2f2f2;letter-spacing:-0.1px">FRA</div>
<div class="abs" style="left:934px;top:2.4px;width:40px;text-align:center;font-size:6.1px;line-height:8px;color:#f2f2f2;letter-spacing:-0.15px">21:57</div>
<div class="abs" style="left:934px;top:11.4px;width:40px;text-align:center;font-size:6.25px;line-height:8px;color:#f2f2f2;letter-spacing:-0.15px">12/07/2019</div>
<svg class="abs" style="left:978.2px;top:5px" width="9" height="8" viewBox="0 0 9 8"><path d="M.4 .4H8.600V6.200H4.600L3 7.600V6.200H.4Z" fill="none" stroke="#f4f4f4" stroke-width=".8"/><path d="M2 2.200H7M2 3.800H7" stroke="#f4f4f4" stroke-width=".6"/></svg>
<div class="abs" style="left:983px;top:10.6px;width:8.8px;height:7.4px;border-radius:50%;background:#2c2c2c;border:.6px solid #c8c8c8;box-sizing:border-box;color:#fff;font-size:4.6px;line-height:6.2px;text-align:center">23</div>
</div>
<!--/TASKBAR-->
</body>
</html>
